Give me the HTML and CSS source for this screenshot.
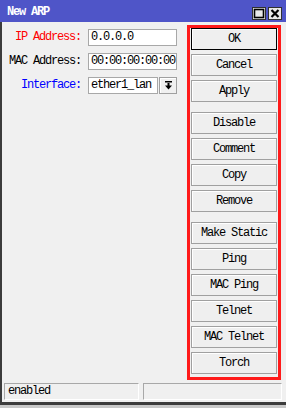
FILE: index.html
```html
<!DOCTYPE html>
<html>
<head>
<meta charset="utf-8">
<link rel="stylesheet" href="styles.css">
</head>
<body>
<div class="window">
  <div class="titlebar">
    <span class="title">New ARP</span>
    <div class="tb-buttons">
      <span class="tb-btn"><svg width="12" height="11" viewBox="0 0 12 11"><rect x="1.5" y="1.5" width="9" height="8" fill="none" stroke="#000" stroke-width="1.6"/></svg></span>
      <span class="tb-btn"><svg width="12" height="11" viewBox="0 0 12 11"><path d="M2.5 2 L9.5 9 M9.5 2 L2.5 9" stroke="#000" stroke-width="2.2"/></svg></span>
    </div>
  </div>
  <div class="main">
    <div class="form">
      <label class="lbl red">IP Address:</label>
      <div class="field"><span class="input">0.0.0.0</span></div>
      <label class="lbl">MAC Address:</label>
      <div class="field"><span class="input">00:00:00:00:00</span></div>
      <label class="lbl blue">Interface:</label>
      <div class="field"><span class="input short">ether1_lan</span><span class="drop"><svg width="9" height="9" viewBox="0 0 9 9"><rect x="1" y="0" width="7" height="1.5" fill="#000"/><rect x="3.5" y="2" width="2" height="3" fill="#000"/><path d="M1 4.5 H8 L4.5 8.5 Z" fill="#000"/></svg></span></div>
    </div>
    <div class="actions">
      <div class="group">
        <span class="btn default">OK</span>
        <span class="btn">Cancel</span>
        <span class="btn">Apply</span>
      </div>
      <div class="group">
        <span class="btn">Disable</span>
        <span class="btn">Comment</span>
        <span class="btn">Copy</span>
        <span class="btn">Remove</span>
      </div>
      <div class="group">
        <span class="btn">Make Static</span>
        <span class="btn">Ping</span>
        <span class="btn">MAC Ping</span>
        <span class="btn">Telnet</span>
        <span class="btn">MAC Telnet</span>
        <span class="btn">Torch</span>
      </div>
    </div>
  </div>
  <div class="status">
    <span class="cell first">enabled</span>
    <span class="cell second"></span>
  </div>
  <div class="bottom"></div>
</div>
</body>
</html>
```
FILE: styles.css
```css
html, body {
  margin: 0;
  padding: 0;
  background: #f0f0f0;
}
.window {
  width: 286px;
  height: 408px;
  display: flex;
  flex-direction: column;
  font-family: "Liberation Mono", "Courier New", monospace;
  font-size: 12px;
  letter-spacing: -1.2px;
  color: #000;
  background: #f0f0f0;
}
.titlebar {
  height: 22px;
  flex: none;
  background: #4f55c8;
  display: flex;
  align-items: center;
  justify-content: space-between;
  padding: 0 4px 0 7px;
}
.title {
  color: #fff;
  font-weight: bold;
  padding-top: 2px;
}
.tb-buttons {
  display: flex;
  gap: 2px;
  padding-top: 4px;
}
.tb-btn {
  width: 14px;
  height: 13px;
  box-sizing: border-box;
  background: #e8e8e8;
  border: 1px solid #303030;
  display: flex;
  align-items: center;
  justify-content: center;
}
.tb-btn svg { display: block; }
.main {
  flex: 1;
  display: flex;
  border-left: 2px solid #3c3c3c;
  min-height: 0;
}
.form {
  flex: 1;
  display: grid;
  grid-template-columns: 79px 89px;
  grid-auto-rows: 17px;
  row-gap: 7px;
  column-gap: 7px;
  padding-top: 7px;
  align-content: start;
}
.lbl {
  text-align: right;
  line-height: 17px;
  white-space: nowrap;
}
.red { color: #ff0000; }
.blue { color: #0000ff; }
.field {
  display: flex;
  gap: 1px;
}
.input {
  flex: 1;
  box-sizing: border-box;
  height: 17px;
  background: #fff;
  border: 1px solid #a8a8a8;
  line-height: 15px;
  padding-left: 2px;
  white-space: nowrap;
  overflow: hidden;
}
.drop {
  width: 18px;
  height: 17px;
  box-sizing: border-box;
  border: 1px solid #a0a0a0;
  box-shadow: inset 1px 1px 0 #fff;
  background: #f0f0f0;
  display: flex;
  align-items: center;
  justify-content: center;
}
.drop svg { display: block; }
.actions {
  flex: none;
  width: 86px;
  margin: 3px 5px 1px 0;
  border: 3px solid #ff1a1a;
  padding: 0 1px 3px 1px;
  box-sizing: content-box;
  display: flex;
  flex-direction: column;
  gap: 10px;
}
.group {
  display: flex;
  flex-direction: column;
  gap: 4px;
}
.btn {
  height: 22px;
  box-sizing: border-box;
  border: 1px solid #a0a0a0;
  box-shadow: inset 1px 1px 0 #fff;
  background: #efefef;
  display: flex;
  align-items: center;
  justify-content: center;
  white-space: nowrap;
}
.btn.default {
  border-color: #000;
}
.status {
  flex: none;
  height: 21px;
  display: flex;
  gap: 4px;
  padding: 2px 4px 0 4px;
  box-sizing: border-box;
  border-left: 2px solid #3c3c3c;
}
.cell {
  height: 17px;
  box-sizing: border-box;
  border-top: 1px solid #a8a8a8;
  border-left: 1px solid #a8a8a8;
  border-right: 1px solid #fff;
  border-bottom: 1px solid #fff;
  line-height: 15px;
  padding-left: 3px;
}
.cell.first { width: 135px; margin-left: -2px; }
.cell.second { flex: 1; }
.bottom {
  flex: none;
  height: 6px;
  border-top: 3px solid #3c3c3c;
  box-sizing: border-box;
  background: #c8c8c8;
}
```
